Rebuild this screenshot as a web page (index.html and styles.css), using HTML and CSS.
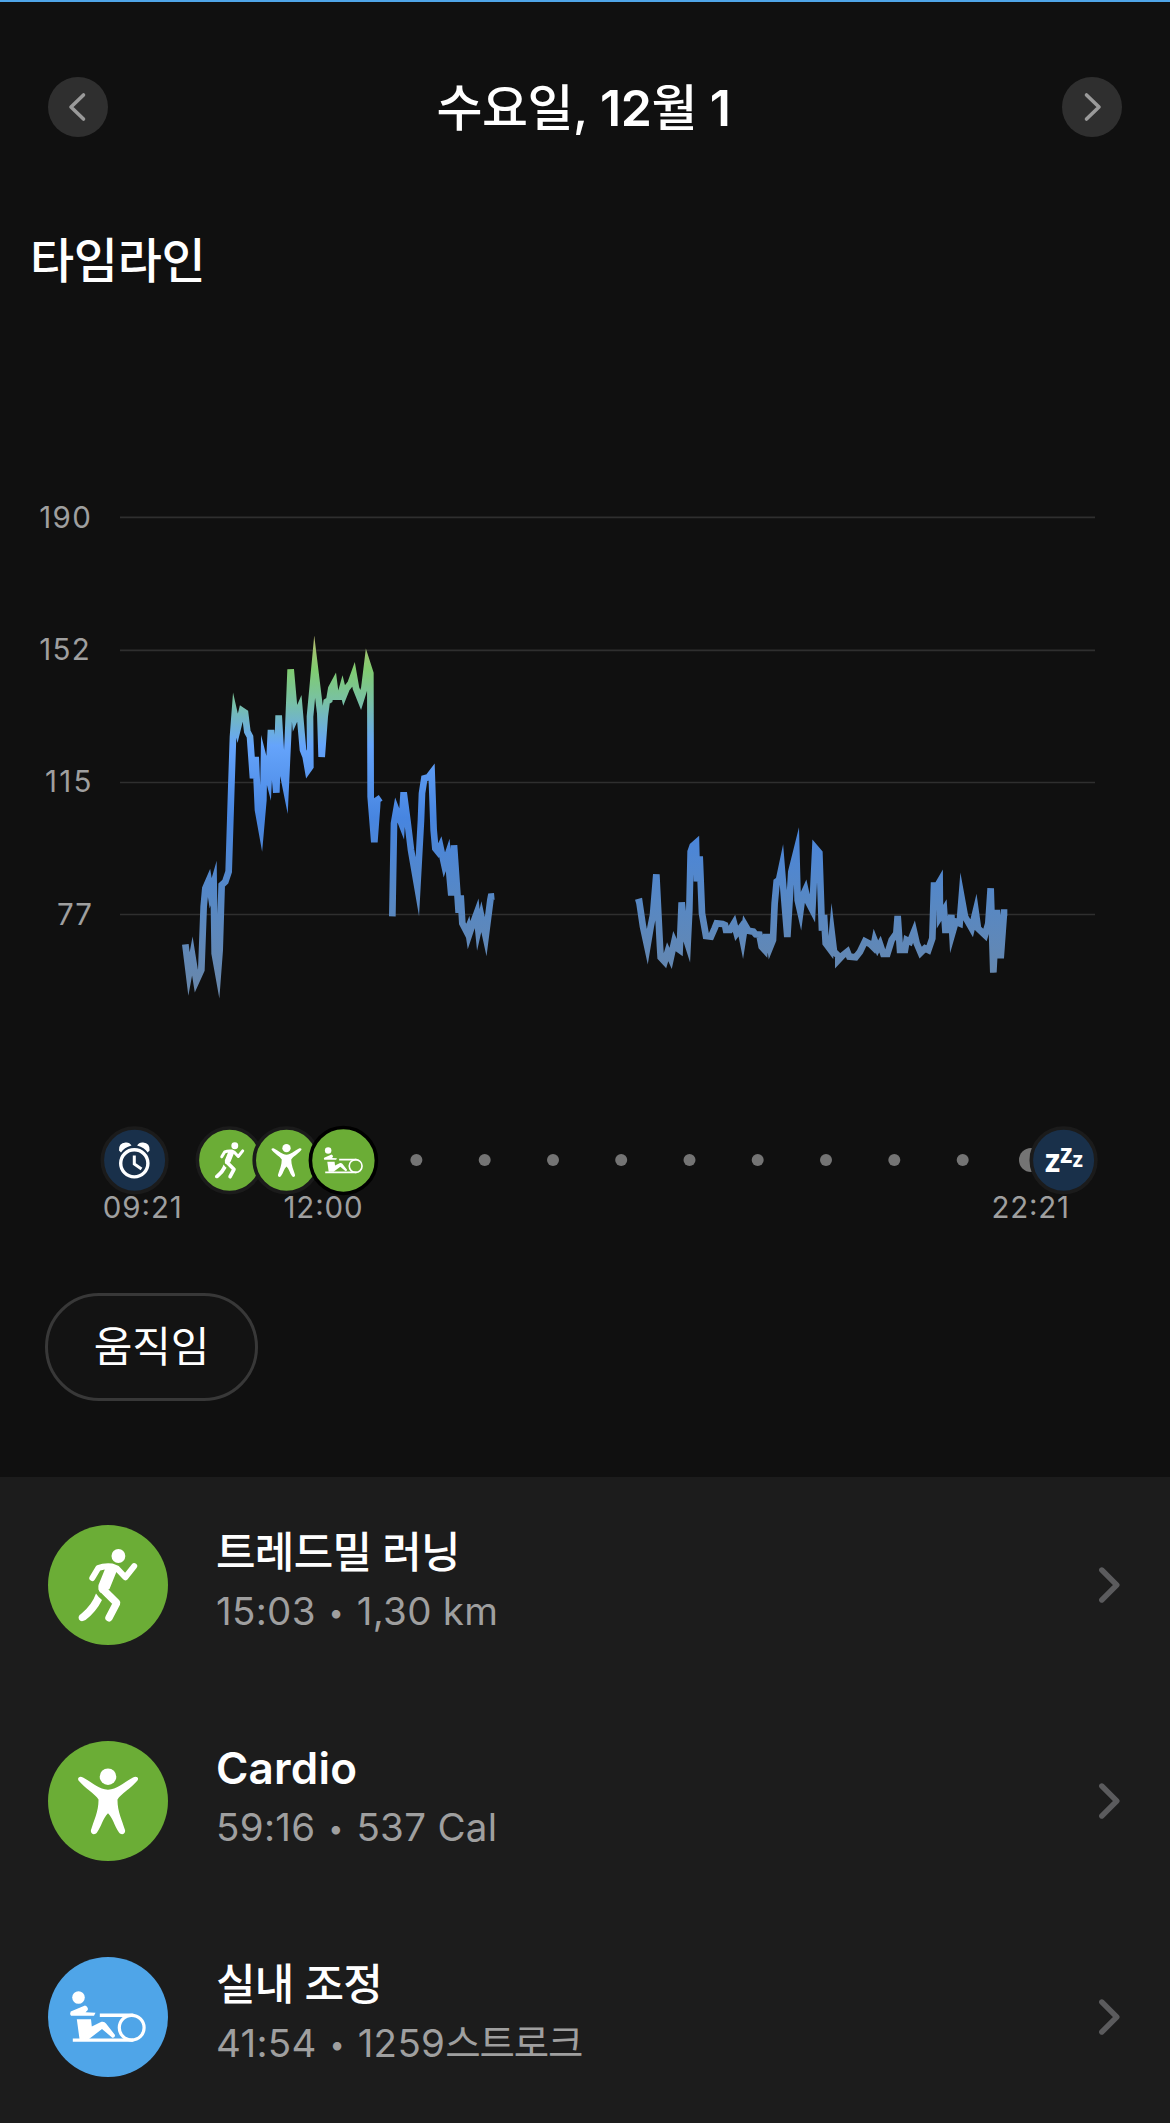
FILE: index.html
```html
<!DOCTYPE html>
<html lang="ko">
<head>
<meta charset="utf-8">
<title>타임라인</title>
<link rel="stylesheet" href="styles.css">
</head>
<body>
<svg class="sprite" width="0" height="0" aria-hidden="true">
  <symbol id="run" viewBox="0 0 120 120">
    <circle cx="70.4" cy="31" r="6.9" fill="#fff"/>
    <g fill="none" stroke="#fff" stroke-linecap="round" stroke-linejoin="round">
      <path d="M44.3 53L50.3 43Q56 40.6 64 41.4L69 43.5L77.3 52.3L86.2 41.2" stroke-width="6"/>
      <path d="M54.6 64L68.7 78L61 92.8" stroke-width="7.4"/>
    </g>
    <path d="M55 41L70 43L61.5 64L53 68Q49.500 65 50.500 60L57 44Z" fill="#fff"/>
    <path d="M48 68.500Q51 73 54 75Q48 87 37.500 95Q33 97.500 31 94.500Q29.500 91 33 89Q44 80 48 68.500Z" fill="#fff"/>
  </symbol>
  <symbol id="cardio" viewBox="0 0 120 120">
    <circle cx="60" cy="35.700" r="8.300" fill="#fff"/>
    <path d="M30.500 39.500C29 36.500 32 34.500 35 36.500C45 42 51 48.500 60 48.700C69 48.500 75 42 85 36.500C88 34.500 91.500 36.500 89.500 39.500C83 47.500 73 52.500 69.500 58.500C69.300 70 74 79 77 89C78 93.500 73 94.500 71 91.500C66.500 85.500 65 77 60 72.300C55 77 53.500 85.500 49 91.500C47 94.500 42 93.500 43 89C46 79 50.700 70 50.500 58.500C47 52.500 37 47.500 30.500 39.500Z" fill="#fff"/>
  </symbol>
  <symbol id="row" viewBox="0 0 120 120">
    <circle cx="30.500" cy="40.500" r="6.300" fill="#fff"/>
    <path d="M22.700 54.500L37 48.500Q40.500 50 39.800 53L37.500 55.300L47.500 55.700L46 58.700H23Q21.500 56.500 22.700 54.500Z" fill="#fff"/>
    <path d="M28.800 62.300H43L43.800 69.500L53.500 64.800Q56.500 64.200 58 66.500L67 78Q67 81 64.300 80.700L54 72L41 82H31.500Z" fill="#fff"/>
    <path d="M53.500 58.300H83.700M26.500 83.100H83.700" fill="none" stroke="#fff" stroke-width="3.400" stroke-linecap="square"/>
    <circle cx="83.700" cy="70.700" r="12.400" fill="none" stroke="#fff" stroke-width="3.200"/>
  </symbol>
  <symbol id="chev" viewBox="0 0 24 40">
    <path d="M2.800 5L17.800 20L2.800 35" fill="none" stroke="currentColor" stroke-width="5.400" stroke-linecap="round" stroke-linejoin="round"/>
  </symbol>
</svg>

<main class="screen">
  <header class="topbar">
    <button class="nav" aria-label="이전"><svg class="nav-icon" viewBox="0 0 60 60"><path d="M35.500 18L23 30L35.500 42"/></svg></button>
    <h1 class="date">수요일, <span class="num">12</span>월 <span class="num">1</span></h1>
    <button class="nav" aria-label="다음"><svg class="nav-icon" viewBox="0 0 60 60"><path d="M24.500 18L37 30L24.500 42"/></svg></button>
  </header>

  <h2 class="heading">타임라인</h2>

  <svg class="chart" viewBox="0 480 1170 560" role="img" aria-label="심박수">
    <defs>
      <linearGradient id="hr" gradientUnits="userSpaceOnUse" x1="0" y1="0" x2="0" y2="1140">
        <stop offset="0" stop-color="#d8b46e"/>
        <stop offset=".05" stop-color="#b2bd70"/>
        <stop offset=".13" stop-color="#80cc70"/>
        <stop offset=".22" stop-color="#78c0a8"/>
        <stop offset=".33" stop-color="#65a4fb"/>
        <stop offset=".52" stop-color="#4785e0"/>
        <stop offset=".74" stop-color="#5788c4"/>
        <stop offset="1" stop-color="#6a87a8"/>
      </linearGradient>
      <linearGradient id="hr-late" href="#hr" gradientUnits="userSpaceOnUse" x1="0" y1="-540" x2="0" y2="600"/>
    </defs>
    <g class="grid">
      <path d="M120 517.400H1095M120 650.400H1095M120 782.500H1095M120 914.500H1095"/>
    </g>
    <g class="axis">
      <text x="39.300" y="528" textLength="51.500">190</text>
      <text x="39.300" y="660" textLength="50.500">152</text>
      <text x="45" y="792.300" textLength="46.500">115</text>
      <text x="57" y="924.700" textLength="35">77</text>
    </g>
    <g class="pulse">
      <path stroke="url(#hr)" transform="translate(170 620) scale(.33333)" d="M46 973L57 1062L67 1008L79 1083L94 1050L101 860L106 805L116 782L122 820L131 789L134 1000L144 1056L149 990L155 795L166 785L176 755L184 500L189 350L194 285L203 325L216 272L225 278L232 335L240 350L249 475L257 411L264 570L273 620L280 540L282 420L296 475L303 330L319 518L326 286L335 440L347 500L354 350L362 148L375 295L388 265L399 390L407 410L414 450L421 440L420 290L434 140L451 280L455 411L464 290L470 245L478 240L484 205L492 190L497 230L510 230L517 205L522 225L530 205L542 190L551 165L558 205L572 240L583 205L592 132L601 160L602 530L613 667L621 560L622 540L632 533"/>
      <path stroke="url(#hr)" transform="translate(320 620) scale(.33333)" d="M217 889L222 610L229 570L245 612L251 517L262 600L273 690L292 800L303 600L306 520L313 475L325 472L335 459L341 630L346 685L354 695L361 680L373 735L383 705L394 826L402 676L412 820L416 878L422 826L427 910L440 935L444 925L447 945L456 918L470 880L475 930L484 890L497 950L511 840L513 830L523 829"/>
      <path stroke="url(#hr-late)" transform="translate(620 800) scale(.33333)" d="M48 309L58 306L69 380L82 440L92 380L99 345L109 223L120 440L122 472L134 485L143 455L152 475L163 425L172 445L179 450L185 307L196 410L203 432L208 330L212 155L218 138L228 129L231 244L239 169L246 340L258 408L273 410L284 385L290 370L308 372L315 375L318 390L330 390L342 370L350 400L361 385L368 420L375 375L385 392L400 395L407 403L418 404L425 440L434 450L438 411L447 411L451 440L459 420L464 310L470 245L477 240L485 202L502 411L514 215L529 155L533 300L541 335L547 290L556 270L564 305L577 330L586 144L598 158L606 392L612 345L617 430L632 450L636 405L642 455L655 468L655 480L667 467L682 455L688 470L707 472L720 455L735 424L750 432L760 442L764 422L773 445L780 432L790 462L802 462L815 420L829 400L833 348L840 450L855 450L860 420L870 425L882 395L890 430L902 458L915 445L925 450L937 415L942 257L952 257L959 245L960 350L972 330L976 390L988 390L994 345L997 400L1007 365L1019 370L1025 295L1035 350L1055 385L1067 335L1074 385L1095 405L1105 370L1112 265L1120 518L1130 330L1142 475L1152 338L1162 338"/>
    </g>
  </svg>

  <svg class="timeline" viewBox="0 1110 1170 130" role="img" aria-label="하루 일정">
    <g class="dots">
      <circle cx="416.400" cy="1160" r="6"/><circle cx="484.700" cy="1160" r="6"/><circle cx="553" cy="1160" r="6"/>
      <circle cx="621.200" cy="1160" r="6"/><circle cx="689.500" cy="1160" r="6"/><circle cx="757.700" cy="1160" r="6"/>
      <circle cx="826" cy="1160" r="6"/><circle cx="894.300" cy="1160" r="6"/><circle cx="962.700" cy="1160" r="6"/>
      <circle cx="1031" cy="1160" r="12"/>
    </g>
    <g class="marker wake">
      <circle cx="134.600" cy="1160.300" r="32.300"/>
      <g fill="none" stroke="#fff" stroke-width="3.400">
        <circle cx="134.300" cy="1163.300" r="13.600"/>
        <path d="M134.300 1155.500V1164L141.500 1169" stroke-width="3"/>
      </g>
      <path d="M119 1150.500Q118.500 1143 125.500 1142.500Q129.500 1142 131.500 1145.500Q124 1147.500 121 1152.500ZM149.600 1150.500Q150.100 1143 143.100 1142.500Q139.100 1142 137.100 1145.500Q144.600 1147.500 147.600 1152.500Z" fill="#fff"/>
    </g>
    <g class="marker sport"><circle cx="229.600" cy="1160.300" r="32.300"/><use href="#run" x="199.600" y="1130.300" width="60" height="60"/></g>
    <g class="marker sport"><circle cx="286.500" cy="1160.300" r="32.300"/><use href="#cardio" x="256.500" y="1130.300" width="60" height="60"/></g>
    <g class="marker sport active"><circle cx="343.400" cy="1160.500" r="33"/><use href="#row" x="312.400" y="1129.500" width="62" height="62"/></g>
    <g class="marker wake">
      <circle cx="1063.600" cy="1160.300" r="32.300"/>
      <g class="zzz"><text x="1044.700" y="1172" font-size="33" textLength="15.500" lengthAdjust="spacingAndGlyphs">z</text><text x="1060" y="1163.300" font-size="26" textLength="12.500" lengthAdjust="spacingAndGlyphs">z</text><text x="1072.600" y="1167" font-size="21" textLength="10.500" lengthAdjust="spacingAndGlyphs">z</text></g>
    </g>
    <g class="times">
      <text x="102.800" y="1218.200" textLength="79">09:21</text>
      <text x="283.500" y="1218.200" textLength="79">12:00</text>
      <text x="991.500" y="1218.200" textLength="77.500">22:21</text>
    </g>
  </svg>

  <button class="chip">움직임</button>

  <ul class="list">
    <li class="item">
      <svg class="badge green" viewBox="0 0 120 120"><use href="#run"/></svg>
      <div class="info"><div class="name">트레드밀 러닝</div><div class="meta">15:03<span class="sep">•</span>1,30 km</div></div>
      <svg class="chev"><use href="#chev"/></svg>
    </li>
    <li class="item">
      <svg class="badge green" viewBox="0 0 120 120"><use href="#cardio"/></svg>
      <div class="info"><div class="name latin">Cardio</div><div class="meta">59:16<span class="sep">•</span>537 Cal</div></div>
      <svg class="chev"><use href="#chev"/></svg>
    </li>
    <li class="item">
      <svg class="badge blue" viewBox="0 0 120 120"><use href="#row"/></svg>
      <div class="info"><div class="name">실내 조정</div><div class="meta">41:54<span class="sep">•</span>1259<span class="unit">스트로크</span></div></div>
      <svg class="chev"><use href="#chev"/></svg>
    </li>
  </ul>
</main>
</body>
</html>
```
FILE: styles.css
```css
* { box-sizing: border-box; }
body {
  margin: 0;
  background: #101010;
  color: #fff;
  font-family: Inter, "Noto Sans CJK KR", sans-serif;
}
.sprite { display: block; position: absolute; }
.screen {
  display: flex;
  flex-direction: column;
  width: 1170px;
  height: 2123px;
  overflow: hidden;
  border-top: 2px solid #4fa5e8;
}
.screen > * { flex-shrink: 0; }
.topbar {
  display: flex;
  align-items: center;
  justify-content: space-between;
  height: 210px;
  padding: 0 48px;
}
.nav {
  width: 60px;
  height: 60px;
  padding: 0;
  border: 0;
  border-radius: 50%;
  background: #2f2f2f;
}
.nav-icon { display: block; width: 60px; height: 60px; }
.nav-icon path {
  fill: none;
  stroke: #9a9a9a;
  stroke-width: 3.6;
  stroke-linecap: round;
  stroke-linejoin: round;
}
.date {
  margin: 0;
  padding: 2px 3px 0 0;
  font-size: 50px;
  font-weight: 500;
  line-height: 60px;
  letter-spacing: -.5px;
}
.num { font-weight: 600; }
.heading {
  margin: 18px 0 0 30px;
  height: 62px;
  font-size: 48px;
  font-weight: 500;
  line-height: 62px;
  letter-spacing: -.3px;
}
.chart { display: block; width: 1170px; height: 560px; margin-top: 188px; }
.grid path { stroke: #2f2f2f; stroke-width: 1.6; fill: none; }
.pulse path { fill: none; stroke-width: 20; stroke-miterlimit: 10; }
.axis text, .times text { fill: #9f9f9f; font-size: 29.500px; }
.timeline { display: block; width: 1170px; height: 130px; margin-top: 70px; }
.dots circle { fill: #747474; }
.marker > circle { stroke: #1b1b1b; stroke-width: 3.6; }
.wake > circle { fill: #19304a; }
.sport > circle { fill: #6bad36; }
.active > circle { stroke: #000; }
.zzz text { fill: #fff; font-family: "Noto Sans", sans-serif; font-weight: 700; }
.chip {
  width: 213px;
  height: 108px;
  margin: 53px 0 0 45px;
  padding: 0;
  border: 3px solid #383838;
  border-radius: 54px;
  background: #131313;
  color: #fff;
  font: 400 42px/100px Inter, "Noto Sans CJK KR", sans-serif;
  letter-spacing: -.2px;
}
.list {
  flex: 1 0 auto;
  margin: 76px 0 0;
  padding: 0;
  background: #1c1c1c;
  list-style: none;
}
.item {
  display: flex;
  align-items: center;
  height: 216px;
  padding: 0 47px 0 48px;
}
.badge { flex: none; width: 120px; height: 120px; border-radius: 50%; }
.green { background: #6bad36; }
.blue { background: #4fa5e8; }
.info { flex: 1; padding: 0 0 6px 48px; }
.name { font-size: 43px; font-weight: 500; line-height: 60px; letter-spacing: -.7px; }
.latin { font-size: 44px; font-weight: 600; letter-spacing: .2px; }
.meta { margin-top: -1px; padding-bottom: 1px; color: #9f9f9f; font-size: 38.500px; line-height: 60px; letter-spacing: .3px; }
.sep { display: inline-block; width: 41px; font-size: 27px; line-height: 1; text-align: center; vertical-align: 3px; }
.unit { letter-spacing: -1.2px; }
.chev { width: 24px; height: 40px; color: #5b5b5d; }
```
